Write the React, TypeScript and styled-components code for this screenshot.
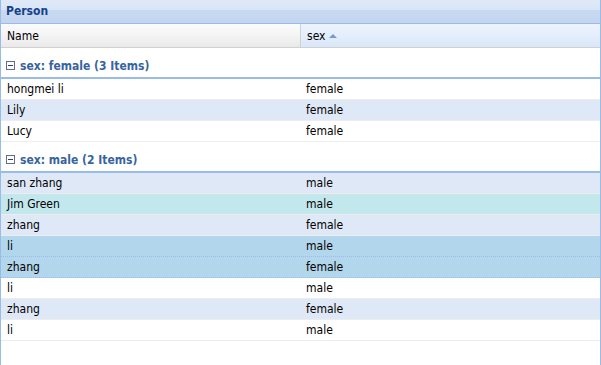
import React from 'react';
import styled, { createGlobalStyle } from 'styled-components';

const GlobalStyle = createGlobalStyle`
  html, body {
    margin: 0;
    padding: 0;
    background: #fff;
  }
  body {
    font-family: "DejaVu Sans Condensed", "DejaVu Sans", sans-serif;
    font-size: 12px;
  }
`;

const Panel = styled.div`
  width: 601px;
  height: 365px;
  box-sizing: border-box;
  border-left: 1px solid #99bbe8;
  border-right: 1px solid #99bbe8;
  background: #fff;
  display: flex;
  flex-direction: column;
  overflow: hidden;
`;

const PanelHeader = styled.div`
  height: 23px;
  border-bottom: 1px solid #99bbe8;
  background: linear-gradient(to bottom, #dfe9f7 0%, #d8e5f6 42%, #c8daf1 43%, #c3d5ef 100%);
  padding-left: 5px;
  font-weight: bold;
  font-size: 12px;
  line-height: 22px;
  color: #15428b;
`;

const HeaderRow = styled.div`
  display: grid;
  grid-template-columns: 299px 1fr;
  height: 23px;
  border-bottom: 1px solid #d0d0d0;
`;

const HeaderCell = styled.div<{ $sorted?: boolean }>`
  display: flex;
  align-items: center;
  gap: 4px;
  padding-left: 6px;
  font-size: 12px;
  color: #000;
  border-left: ${(p) => (p.$sorted ? '1px solid #d0d0d0' : 'none')};
  background: ${(p) =>
    p.$sorted
      ? 'linear-gradient(to bottom, #ecf3fd 0%, #e4eefc 50%, #d9e7fa 100%)'
      : 'linear-gradient(to bottom, #fbfbfb 0%, #f4f4f4 50%, #e9e9e9 100%)'};
`;

const SortArrow = styled.span`
  width: 0;
  height: 0;
  border-left: 4px solid transparent;
  border-right: 4px solid transparent;
  border-bottom: 4px solid #7a99c4;
  margin-top: 1px;
`;

const Body = styled.div`
  flex: 1;
`;

const GroupHeader = styled.div`
  padding-top: 6px;
  border-bottom: 2px solid #99bbe8;
`;

const GroupTitle = styled.div`
  display: flex;
  align-items: center;
  gap: 5px;
  padding: 4px 4px 4px 5px;
  height: 15px;
  font-weight: bold;
  font-size: 12px;
  color: #3764a0;
`;

const Row = styled.div<{ $tone: 'plain' | 'alt' | 'over' | 'selected' }>`
  display: grid;
  grid-template-columns: 299px 1fr;
  height: 20px;
  line-height: 20px;
  box-sizing: content-box;
  border-bottom: 1px ${(p) => (p.$tone === 'selected' ? 'dotted #a3bae9' : 'solid #ededed')};
  background: ${(p) =>
    p.$tone === 'alt'
      ? '#dfe8f6'
      : p.$tone === 'over'
      ? '#c2e8ed'
      : p.$tone === 'selected'
      ? '#b2d6eb'
      : '#fff'};
`;

const Cell = styled.div`
  padding-left: 6px;
  font-size: 12px;
  color: #000;
  white-space: nowrap;
`;

const CollapseIcon = () => (
  <svg width="9" height="9" viewBox="0 0 9 9">
    <rect x="0.5" y="0.5" width="8" height="8" fill="#fff" stroke="#5d6f8a" />
    <line x1="2" y1="4.5" x2="7" y2="4.5" stroke="#2f4468" />
  </svg>
);

type Tone = 'plain' | 'alt' | 'over' | 'selected';

const groups: { title: string; rows: [string, string, Tone][] }[] = [
  {
    title: 'sex: female (3 Items)',
    rows: [
      ['hongmei li', 'female', 'plain'],
      ['Lily', 'female', 'alt'],
      ['Lucy', 'female', 'plain'],
    ],
  },
  {
    title: 'sex: male (2 Items)',
    rows: [
      ['san zhang', 'male', 'alt'],
      ['Jim Green', 'male', 'over'],
      ['zhang', 'female', 'alt'],
      ['li', 'male', 'selected'],
      ['zhang', 'female', 'selected'],
      ['li', 'male', 'plain'],
      ['zhang', 'female', 'alt'],
      ['li', 'male', 'plain'],
    ],
  },
];

const App: React.FC = () => (
  <>
    <GlobalStyle />
    <Panel>
      <PanelHeader>Person</PanelHeader>
      <HeaderRow>
        <HeaderCell>Name</HeaderCell>
        <HeaderCell $sorted>
          sex <SortArrow />
        </HeaderCell>
      </HeaderRow>
      <Body>
        {groups.map((g) => (
          <div key={g.title}>
            <GroupHeader>
              <GroupTitle>
                <CollapseIcon />
                {g.title}
              </GroupTitle>
            </GroupHeader>
            {g.rows.map(([name, sex, tone], i) => (
              <Row key={i} $tone={tone}>
                <Cell>{name}</Cell>
                <Cell>{sex}</Cell>
              </Row>
            ))}
          </div>
        ))}
      </Body>
    </Panel>
  </>
);

export default App;
